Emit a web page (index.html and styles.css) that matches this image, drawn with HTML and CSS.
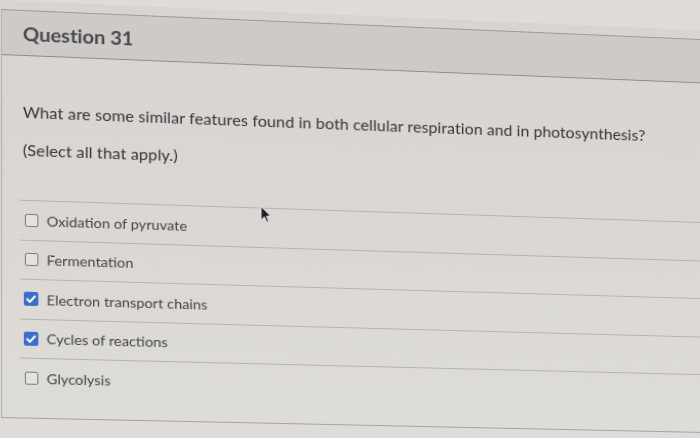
FILE: index.html
```html
<!DOCTYPE html>
<html lang="en">
<head>
<meta charset="utf-8">
<title>Question 31</title>
<link rel="stylesheet" href="styles.css">
</head>
<body>
<div class="page">
  <div class="card">
    <div class="header"><h2 class="title">Question 31</h2></div>
    <div class="body">
      <p class="qtext">What are some similar features found in both cellular respiration and in photosynthesis?</p>
      <p class="qtext second">(Select all that apply.)</p>
      <ul class="answers">
        <li class="answer"><span class="box"></span><span class="label">Oxidation of pyruvate</span></li>
        <li class="answer"><span class="box"></span><span class="label">Fermentation</span></li>
        <li class="answer"><span class="box checked"><svg viewBox="0 0 14 14" width="14" height="14"><path d="M3.2 7.4l2.6 2.6 4.9-5.6" fill="none" stroke="#fff" stroke-width="2" stroke-linecap="round" stroke-linejoin="round"/></svg></span><span class="label">Electron transport chains</span></li>
        <li class="answer"><span class="box checked"><svg viewBox="0 0 14 14" width="14" height="14"><path d="M3.2 7.4l2.6 2.6 4.9-5.6" fill="none" stroke="#fff" stroke-width="2" stroke-linecap="round" stroke-linejoin="round"/></svg></span><span class="label">Cycles of reactions</span></li>
        <li class="answer"><span class="box"></span><span class="label">Glycolysis</span></li>
      </ul>
    </div>
  </div>
  <svg class="cursor" viewBox="0 0 12 18" width="12" height="18"><path d="M1 1 L1 14.5 L4.3 11.4 L6.6 16.6 L8.6 15.7 L6.4 10.6 L10.8 10.6 Z" fill="#1d1d1f" stroke="#e8e8e8" stroke-width="1" stroke-linejoin="round"/></svg>
</div>
</body>
</html>
```
FILE: styles.css
```css
html {
  background: #dedbd9;
  overflow: hidden;
}
body {
  margin: 0;
  height: 438px;
  font-family: Lato, "Open Sans", sans-serif;
}
.page {
  position: relative;
  width: 700px;
  height: 423px;
  padding-top: 9px;
  box-sizing: border-box;
  background: linear-gradient(180deg, #d7d4d2 0%, #d9d6d4 45%, #dedcd9 100%);
  transform-origin: 0 0;
  transform: matrix3d(1.0384, 0.045, 0, 0.0000549, 0, 1, 0, 0, 0, 0, 1, 0, 0, 0, 0, 1);
}
.card {
  margin-left: 1px;
  border-left: 1px solid #b4b1af;
  border-bottom: 1px solid #a6a4a2;
}
.header {
  height: 44px;
  border-top: 1px solid #9c9a98;
  border-bottom: 1px solid #8f8d8b;
  background: #cdcac8;
  display: flex;
  align-items: center;
  padding-left: 20px;
}
.title {
  margin: 0;
  font-size: 19.7px;
  font-weight: 700;
  color: #4a4a4d;
  letter-spacing: -0.1px;
}
.body {
  padding: 44px 0 20px 20px;
}
.qtext {
  margin: 0;
  font-size: 16px;
  line-height: 24px;
  letter-spacing: 0.1px;
  color: #363638;
}
.qtext.second {
  margin-top: 14px;
}
.answers {
  list-style: none;
  margin: 38px 0 0 -3px;
  padding: 0;
}
.answer {
  height: 39.5px;
  box-sizing: border-box;
  border-top: 1px solid #b6b4b2;
  display: flex;
  align-items: center;
  padding-left: 5px;
  gap: 8px;
  font-size: 14.3px;
  color: #454547;
}
.box {
  width: 13px;
  height: 13px;
  box-sizing: border-box;
  border: 1.5px solid #7c7b7b;
  border-radius: 2px;
  background: #e4e2e0;
  display: flex;
  align-items: center;
  justify-content: center;
}
.box.checked {
  width: 14px;
  height: 14px;
  margin-left: -1px;
  border: none;
  background: #3c6dcc;
}
.cursor {
  position: absolute;
  left: 254px;
  top: 197px;
}
```
